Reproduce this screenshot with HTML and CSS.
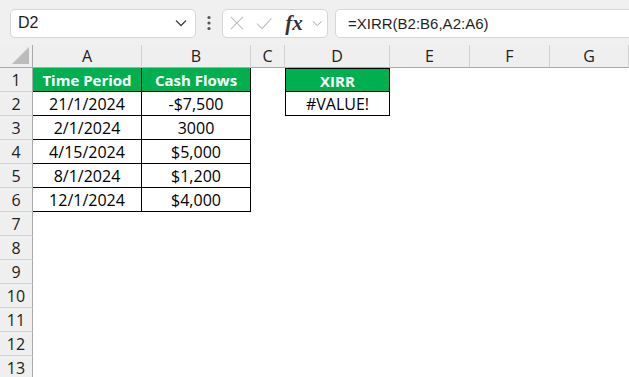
FILE: index.html
```html
<!DOCTYPE html>
<html lang="en">
<head>
    <meta charset="UTF-8">
    <meta name="viewport" content="width=device-width, initial-scale=1.0">
    <title>XIRR</title>
    <link rel="stylesheet" href="styles.css">
</head>
<body>
    <div class="toolbar">
        <div class="namebox">
            <span>D2</span>
            <svg width="12" height="8" viewBox="0 0 12 8"><polyline points="1,1.5 6,6.5 11,1.5" fill="none" stroke="#444" stroke-width="1.3"/></svg>
        </div>
        <div class="grip">
            <svg width="4" height="16" viewBox="0 0 4 16"><circle cx="2" cy="2.5" r="1.6" fill="#555"/><circle cx="2" cy="8" r="1.6" fill="#555"/><circle cx="2" cy="13.5" r="1.6" fill="#555"/></svg>
        </div>
        <div class="fxbtns">
            <svg width="16" height="16" viewBox="0 0 16 16"><path d="M1 1 L15 15 M15 1 L1 15" stroke="#bdbdbd" stroke-width="1.2"/></svg>
            <svg width="19" height="15" viewBox="0 0 19 15"><polyline points="1,7.5 7,13.5 18,1.5" fill="none" stroke="#bdbdbd" stroke-width="1.2"/></svg>
            <span class="fx">fx</span>
            <svg width="12" height="7" viewBox="0 0 12 7"><polyline points="1,1 6,6 11,1" fill="none" stroke="#9a9a9a" stroke-width="1.1"/></svg>
        </div>
        <div class="formula">=XIRR(B2:B6,A2:A6)</div>
    </div>

    <div class="sheet">
        <div class="corner"><svg width="17" height="17" viewBox="0 0 17 17"><polygon points="17,0 17,17 0,17" fill="#bcbcbc"/></svg></div>
        <div class="ch">A</div><div class="ch">B</div><div class="ch">C</div><div class="ch">D</div><div class="ch">E</div><div class="ch">F</div><div class="ch">G</div>

        <div class="rh">1</div>
        <div class="c g b">Time Period</div><div class="c g b">Cash Flows</div><div></div>
        <div class="c g b dl dt">XIRR</div><div class="rest"></div>

        <div class="rh">2</div>
        <div class="c b">21/1/2024</div><div class="c b">-$7,500</div><div></div>
        <div class="c b dl">#VALUE!</div><div class="rest"></div>

        <div class="rh">3</div>
        <div class="c b">2/1/2024</div><div class="c b">3000</div><div class="wide"></div>

        <div class="rh">4</div>
        <div class="c b">4/15/2024</div><div class="c b">$5,000</div><div class="wide"></div>

        <div class="rh">5</div>
        <div class="c b">8/1/2024</div><div class="c b">$1,200</div><div class="wide"></div>

        <div class="rh">6</div>
        <div class="c b">12/1/2024</div><div class="c b">$4,000</div><div class="wide"></div>

        <div class="rh">7</div><div class="empty"></div>
        <div class="rh">8</div><div class="empty"></div>
        <div class="rh">9</div><div class="empty"></div>
        <div class="rh">10</div><div class="empty"></div>
        <div class="rh">11</div><div class="empty"></div>
        <div class="rh">12</div><div class="empty"></div>
        <div class="rh">13</div><div class="empty"></div>
    </div>
</body>
</html>
```

FILE: styles.css
```css
html,body{margin:0;padding:0;height:100%;width:100%;overflow:hidden;}
body{
    background:#fff;
    font-family:"Liberation Sans",Arial,sans-serif;
    color:#000;
}
*{box-sizing:border-box;}

/* top bar with name box and formula */
.toolbar{
    height:45px;
    background:#f0f0f0;
    display:flex;
    align-items:center;
    padding-left:10px;
    padding-top:1px;
}
.namebox{
    width:186px;
    height:29px;
    background:#fff;
    border:1px solid #d6d6d6;
    border-radius:5px;
    display:flex;
    align-items:center;
    justify-content:space-between;
    padding:0 8px 0 7px;
    font-size:16px;
    color:#1f1f1f;
}
.grip{
    width:26px;
    display:flex;
    justify-content:center;
    align-items:center;
}
.fxbtns{
    width:106px;
    height:29px;
    background:#fff;
    border:1px solid #d6d6d6;
    border-radius:5px;
    display:flex;
    align-items:center;
    padding:0 5px 0 7px;
    gap:11px;
}
.fxbtns svg:nth-child(2){margin-left:1px;}
.fx{
    font-family:"Liberation Serif",serif;
    font-style:italic;
    font-weight:bold;
    font-size:21px;
    color:#333;
    margin-left:2px;
    margin-right:-8px;
    line-height:1;
}
.fxbtns svg:last-child{margin-left:6px;}
.formula{
    flex:1;
    height:29px;
    margin-left:7px;
    margin-right:-10px;
    background:#fff;
    border:1px solid #d6d6d6;
    border-radius:5px;
    display:flex;
    align-items:center;
    padding-left:12px;
    font-size:15px;
    color:#1f1f1f;
}

/* spreadsheet grid */
.sheet{
    display:grid;
    grid-template-columns:33px 109px 109px 34px 105px 80px 80px 1fr;
    grid-template-rows:23px repeat(14,24px);
    font-family:"Open Sans","Liberation Sans",sans-serif;
}
.corner{
    background:#efefef;
    border-right:1px solid #a9a9a9;
    border-bottom:1px solid #a9a9a9;
    display:flex;
    align-items:flex-end;
    justify-content:flex-end;
    padding:0 3px 3px 0;
}
.ch{
    background:#efefef;
    border-right:1px solid #d2d2d2;
    border-bottom:1px solid #a9a9a9;
    display:flex;
    align-items:center;
    justify-content:center;
    font-size:16px;
    color:#222;
}
.rh{
    grid-column:1;
    background:#efefef;
    border-right:1px solid #a9a9a9;
    border-bottom:1px solid #d2d2d2;
    display:flex;
    align-items:center;
    justify-content:center;
    font-size:16px;
    color:#222;
    padding-top:1px;
}
.c{
    display:flex;
    align-items:center;
    justify-content:center;
    font-size:16px;
    padding-top:1px;
}
.g{
    background:#00b050;
    color:#fff;
    font-weight:bold;
    font-size:15px;
}
.b{
    border-right:1px solid #000;
    border-bottom:1px solid #000;
}
.dl{border-left:1px solid #000;}
.dt{border-top:1px solid #000;}
.rest{grid-column:6 / -1;}
.wide{grid-column:4 / -1;}
.empty{grid-column:2 / -1;}
```
